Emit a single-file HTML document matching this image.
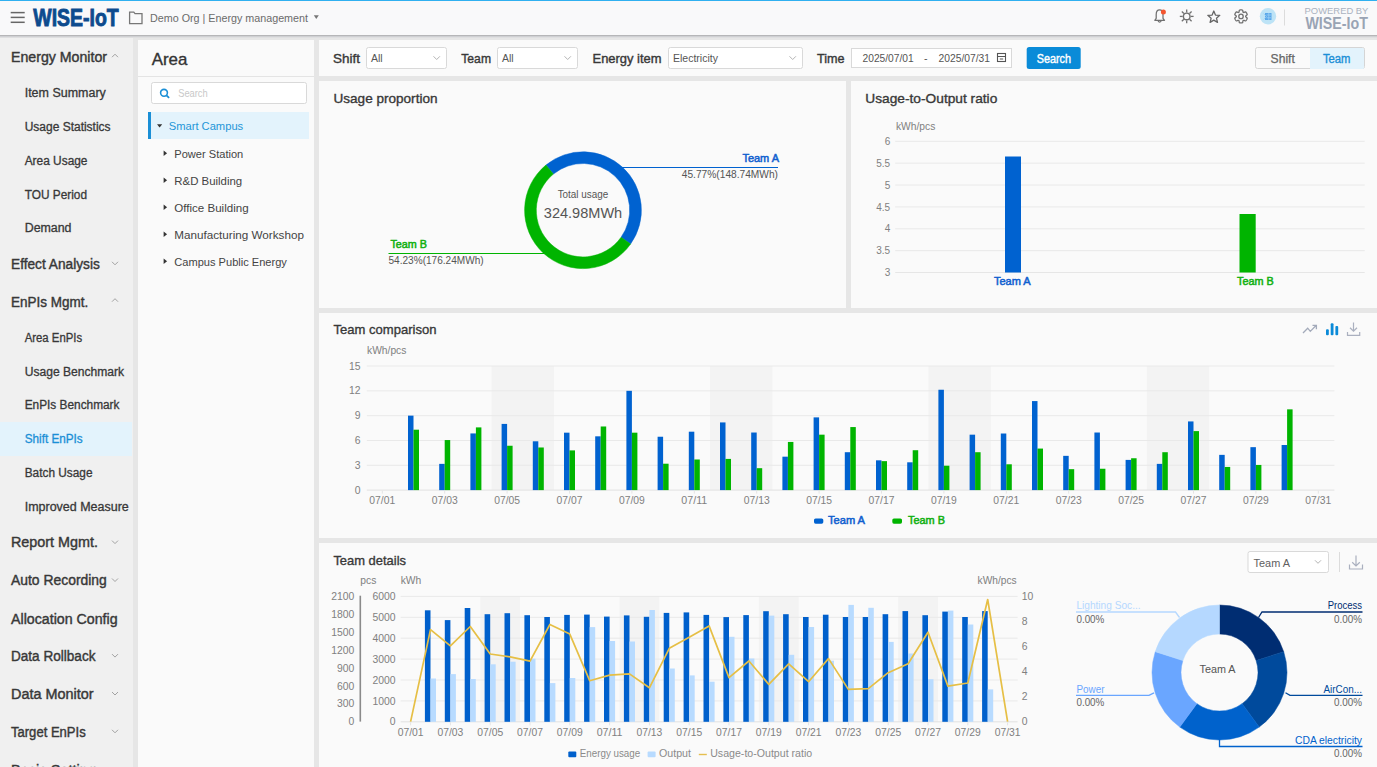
<!DOCTYPE html><html><head><meta charset="utf-8"><style>html,body{margin:0;padding:0;width:1377px;height:767px;overflow:hidden;background:#e6e6e6}svg{display:block}</style></head><body><svg width="1377" height="767" viewBox="0 0 1377 767" font-family='"Liberation Sans", sans-serif'>
<rect x="0" y="0" width="1377" height="767" fill="#e6e6e6"/>
<rect x="0" y="0" width="1377" height="35" fill="#f9f9fa"/>
<rect x="0" y="0" width="1377" height="1" fill="#30b0f0"/>
<rect x="0" y="35" width="1377" height="1" fill="#b6b6b8"/>
<rect x="0" y="36" width="1377" height="1" fill="#cfd0d3"/>
<rect x="0" y="37" width="1377" height="1" fill="#dfdfe0"/>
<rect x="10.7" y="11.85" width="14" height="1.5" fill="#666"/>
<rect x="10.7" y="16.65" width="14" height="1.5" fill="#666"/>
<rect x="10.7" y="21.55" width="14" height="1.5" fill="#666"/>
<text x="33.3" y="26.1" font-size="23.5" fill="#0d4b8e" font-weight="700" text-anchor="start" textLength="85.4" lengthAdjust="spacingAndGlyphs" stroke="#0d4b8e" stroke-width="0.9">WISE-IoT</text>
<path d="M129.6 12.2 h4.2 l1.2 1.4 h7 v10 h-12.4 z" fill="none" stroke="#777" stroke-width="1.3"/>
<text x="150" y="22.1" font-size="11" fill="#6b6b6b" text-anchor="start" textLength="158" lengthAdjust="spacingAndGlyphs">Demo Org | Energy management</text>
<path d="M313.8 15.3 h5 l-2.5 3.6 z" fill="#777"/>
<path d="M1154.8 20.3 L1156.2 18.3 V14.6 C1156.2 11.8 1157.7 9.9 1159.6 9.9 C1161.5 9.9 1163 11.8 1163 14.6 V18.3 L1164.5 20.3 Z M1158.1 20.6 a1.5 1.5 0 0 0 3 0" fill="none" stroke="#707070" stroke-width="1.25" stroke-linejoin="round"/>
<circle cx="1163.4" cy="12.1" r="2.5" fill="#f4552f"/>
<circle cx="1186.7" cy="16.4" r="3.3" fill="none" stroke="#707070" stroke-width="1.4"/>
<line x1="1190.70" y1="16.40" x2="1193.60" y2="16.40" stroke="#707070" stroke-width="1.3"/>
<line x1="1189.53" y1="19.23" x2="1191.58" y2="21.28" stroke="#707070" stroke-width="1.3"/>
<line x1="1186.70" y1="20.40" x2="1186.70" y2="23.30" stroke="#707070" stroke-width="1.3"/>
<line x1="1183.87" y1="19.23" x2="1181.82" y2="21.28" stroke="#707070" stroke-width="1.3"/>
<line x1="1182.70" y1="16.40" x2="1179.80" y2="16.40" stroke="#707070" stroke-width="1.3"/>
<line x1="1183.87" y1="13.57" x2="1181.82" y2="11.52" stroke="#707070" stroke-width="1.3"/>
<line x1="1186.70" y1="12.40" x2="1186.70" y2="9.50" stroke="#707070" stroke-width="1.3"/>
<line x1="1189.53" y1="13.57" x2="1191.58" y2="11.52" stroke="#707070" stroke-width="1.3"/>
<polygon points="1213.80,11.00 1215.45,15.03 1219.79,15.35 1216.46,18.17 1217.50,22.40 1213.80,20.10 1210.10,22.40 1211.14,18.17 1207.81,15.35 1212.15,15.03" fill="none" stroke="#666" stroke-width="1.3" stroke-linejoin="round"/>
<polygon points="1241.00,9.90 1241.43,9.91 1241.85,9.96 1242.27,10.02 1242.66,10.21 1242.82,11.05 1242.92,11.77 1243.08,12.18 1243.35,12.33 1243.61,12.49 1244.05,12.43 1244.73,12.15 1245.53,11.87 1245.89,12.11 1246.16,12.44 1246.40,12.79 1246.63,13.15 1246.83,13.53 1247.01,13.91 1247.16,14.31 1247.19,14.74 1246.54,15.30 1245.97,15.75 1245.69,16.09 1245.70,16.40 1245.69,16.71 1245.97,17.05 1246.54,17.50 1247.19,18.06 1247.16,18.49 1247.01,18.89 1246.83,19.27 1246.63,19.65 1246.40,20.01 1246.16,20.36 1245.89,20.69 1245.53,20.93 1244.73,20.65 1244.05,20.37 1243.61,20.31 1243.35,20.47 1243.08,20.62 1242.92,21.03 1242.82,21.75 1242.66,22.59 1242.27,22.78 1241.85,22.84 1241.43,22.89 1241.00,22.90 1240.57,22.89 1240.15,22.84 1239.73,22.78 1239.34,22.59 1239.18,21.75 1239.08,21.03 1238.92,20.62 1238.65,20.47 1238.39,20.31 1237.95,20.37 1237.27,20.65 1236.47,20.93 1236.11,20.69 1235.84,20.36 1235.60,20.01 1235.37,19.65 1235.17,19.27 1234.99,18.89 1234.84,18.49 1234.81,18.06 1235.46,17.50 1236.03,17.05 1236.31,16.71 1236.30,16.40 1236.31,16.09 1236.03,15.75 1235.46,15.30 1234.81,14.74 1234.84,14.31 1234.99,13.91 1235.17,13.53 1235.37,13.15 1235.60,12.79 1235.84,12.44 1236.11,12.11 1236.47,11.87 1237.27,12.15 1237.95,12.43 1238.39,12.49 1238.65,12.33 1238.92,12.18 1239.08,11.77 1239.18,11.05 1239.34,10.21 1239.73,10.02 1240.15,9.96 1240.57,9.91" fill="none" stroke="#707070" stroke-width="1.3" stroke-linejoin="round"/>
<circle cx="1241" cy="16.4" r="2.2" fill="none" stroke="#707070" stroke-width="1.3"/>
<circle cx="1268" cy="16.3" r="8.2" fill="#bde3f6"/>
<rect x="1265" y="13" width="6.5" height="7" fill="#5aa8ea"/><path d="M1263.5 13.5 l3 3 l-3 3 M1266.5 15 h4.5 M1266.5 17.8 h4.5 M1268.8 13 v7" stroke="#9ccff5" stroke-width="0.8" fill="none"/>
<rect x="1284" y="9.5" width="1" height="16" fill="#dcdcdc"/>
<text x="1304.6" y="13.8" font-size="9.2" fill="#aab2c0" text-anchor="start" textLength="63.8" lengthAdjust="spacingAndGlyphs">POWERED BY</text>
<text x="1305.4" y="28.9" font-size="16.6" fill="#9aa4b4" font-weight="700" text-anchor="start" textLength="62.6" lengthAdjust="spacingAndGlyphs">WISE-IoT</text>
<rect x="0" y="38" width="133" height="729" fill="#f0f0f0"/>
<rect x="0" y="422" width="132" height="34" fill="#e3f3fc"/>
<text x="11" y="62" font-size="13.8" fill="#383838" stroke="#383838" stroke-width="0.4" text-anchor="start" textLength="96" lengthAdjust="spacingAndGlyphs">Energy Monitor</text>
<path d="M112 57.2 l3 -3 l3 3" fill="none" stroke="#999" stroke-width="0.9"/>
<text x="11" y="268.5" font-size="13.8" fill="#383838" stroke="#383838" stroke-width="0.4" text-anchor="start" textLength="88.8" lengthAdjust="spacingAndGlyphs">Effect Analysis</text>
<path d="M112 261.8 l3 3 l3 -3" fill="none" stroke="#999" stroke-width="0.9"/>
<text x="11" y="306.5" font-size="13.8" fill="#383838" stroke="#383838" stroke-width="0.4" text-anchor="start" textLength="77.2" lengthAdjust="spacingAndGlyphs">EnPIs Mgmt.</text>
<path d="M112 301.7 l3 -3 l3 3" fill="none" stroke="#999" stroke-width="0.9"/>
<text x="11" y="547.3" font-size="13.8" fill="#383838" stroke="#383838" stroke-width="0.4" text-anchor="start" textLength="87" lengthAdjust="spacingAndGlyphs">Report Mgmt.</text>
<path d="M112 540.5999999999999 l3 3 l3 -3" fill="none" stroke="#999" stroke-width="0.9"/>
<text x="11" y="585.2" font-size="13.8" fill="#383838" stroke="#383838" stroke-width="0.4" text-anchor="start" textLength="95.8" lengthAdjust="spacingAndGlyphs">Auto Recording</text>
<path d="M112 578.5 l3 3 l3 -3" fill="none" stroke="#999" stroke-width="0.9"/>
<text x="11" y="623.5" font-size="13.8" fill="#383838" stroke="#383838" stroke-width="0.4" text-anchor="start" textLength="106.6" lengthAdjust="spacingAndGlyphs">Allocation Config</text>
<text x="11" y="660.8" font-size="13.8" fill="#383838" stroke="#383838" stroke-width="0.4" text-anchor="start" textLength="84.5" lengthAdjust="spacingAndGlyphs">Data Rollback</text>
<path d="M112 654.0999999999999 l3 3 l3 -3" fill="none" stroke="#999" stroke-width="0.9"/>
<text x="11" y="698.7" font-size="13.8" fill="#383838" stroke="#383838" stroke-width="0.4" text-anchor="start" textLength="82.6" lengthAdjust="spacingAndGlyphs">Data Monitor</text>
<path d="M112 692.0 l3 3 l3 -3" fill="none" stroke="#999" stroke-width="0.9"/>
<text x="11" y="736.5" font-size="13.8" fill="#383838" stroke="#383838" stroke-width="0.4" text-anchor="start" textLength="74.7" lengthAdjust="spacingAndGlyphs">Target EnPIs</text>
<path d="M112 729.8 l3 3 l3 -3" fill="none" stroke="#999" stroke-width="0.9"/>
<text x="11" y="774.5" font-size="13.8" fill="#383838" stroke="#383838" stroke-width="0.4" text-anchor="start" textLength="85" lengthAdjust="spacingAndGlyphs">Basic Setting</text>
<text x="24.7" y="97.1" font-size="12" fill="#383838" stroke="#383838" stroke-width="0.3" text-anchor="start" textLength="81.1" lengthAdjust="spacingAndGlyphs">Item Summary</text>
<text x="24.7" y="130.9" font-size="12" fill="#383838" stroke="#383838" stroke-width="0.3" text-anchor="start" textLength="85.9" lengthAdjust="spacingAndGlyphs">Usage Statistics</text>
<text x="24.7" y="164.70000000000002" font-size="12" fill="#383838" stroke="#383838" stroke-width="0.3" text-anchor="start" textLength="62.8" lengthAdjust="spacingAndGlyphs">Area Usage</text>
<text x="24.7" y="198.5" font-size="12" fill="#383838" stroke="#383838" stroke-width="0.3" text-anchor="start" textLength="62.3" lengthAdjust="spacingAndGlyphs">TOU Period</text>
<text x="24.7" y="232.3" font-size="12" fill="#383838" stroke="#383838" stroke-width="0.3" text-anchor="start" textLength="46.8" lengthAdjust="spacingAndGlyphs">Demand</text>
<text x="24.7" y="342.0" font-size="12" fill="#383838" stroke="#383838" stroke-width="0.3" text-anchor="start" textLength="57.4" lengthAdjust="spacingAndGlyphs">Area EnPIs</text>
<text x="24.7" y="375.8" font-size="12" fill="#383838" stroke="#383838" stroke-width="0.3" text-anchor="start" textLength="99.4" lengthAdjust="spacingAndGlyphs">Usage Benchmark</text>
<text x="24.7" y="409.2" font-size="12" fill="#383838" stroke="#383838" stroke-width="0.3" text-anchor="start" textLength="94.8" lengthAdjust="spacingAndGlyphs">EnPIs Benchmark</text>
<text x="24.7" y="443.40000000000003" font-size="12" fill="#1b8fd6" stroke="#1b8fd6" stroke-width="0.3" text-anchor="start" textLength="58" lengthAdjust="spacingAndGlyphs">Shift EnPIs</text>
<text x="24.7" y="477.1" font-size="12" fill="#383838" stroke="#383838" stroke-width="0.3" text-anchor="start" textLength="67.8" lengthAdjust="spacingAndGlyphs">Batch Usage</text>
<text x="24.7" y="511.3" font-size="12" fill="#383838" stroke="#383838" stroke-width="0.3" text-anchor="start" textLength="104.1" lengthAdjust="spacingAndGlyphs">Improved Measure</text>
<rect x="138" y="40" width="176" height="727" fill="#fafafa"/>
<rect x="138" y="76" width="176" height="1" fill="#e4e4e4"/>
<text x="151.7" y="64.6" font-size="17" fill="#333" stroke="#333" stroke-width="0.35" text-anchor="start" textLength="35.7" lengthAdjust="spacingAndGlyphs">Area</text>
<rect x="151.5" y="82.5" width="155" height="21" rx="2" fill="#fff" stroke="#d9d9d9" stroke-width="1"/>
<circle cx="164" cy="92.8" r="3.4" fill="none" stroke="#1b8fd6" stroke-width="1.6"/><path d="M166.5 95.3 l2.6 2.6" stroke="#1b8fd6" stroke-width="1.8"/>
<text x="178.2" y="97.3" font-size="10.5" fill="#c8c8c8" text-anchor="start" textLength="29.5" lengthAdjust="spacingAndGlyphs">Search</text>
<rect x="148" y="112" width="161" height="27" fill="#e3f3fc"/>
<rect x="148" y="112" width="3" height="27" fill="#1b8fd6"/>
<path d="M157 124.2 h5.2 l-2.6 3.2 z" fill="#333"/>
<text x="168.7" y="130.3" font-size="11.3" fill="#1f96d8" text-anchor="start" textLength="74.5" lengthAdjust="spacingAndGlyphs">Smart Campus</text>
<path d="M163.6 150.5 v5.6 l3.5 -2.8 z" fill="#333"/>
<text x="174.3" y="157.5" font-size="11.5" fill="#444" text-anchor="start" textLength="69" lengthAdjust="spacingAndGlyphs">Power Station</text>
<path d="M163.6 177.5 v5.6 l3.5 -2.8 z" fill="#333"/>
<text x="174.3" y="184.5" font-size="11.5" fill="#444" text-anchor="start" textLength="67.9" lengthAdjust="spacingAndGlyphs">R&amp;D Building</text>
<path d="M163.6 204.5 v5.6 l3.5 -2.8 z" fill="#333"/>
<text x="174.3" y="211.5" font-size="11.5" fill="#444" text-anchor="start" textLength="74.3" lengthAdjust="spacingAndGlyphs">Office Building</text>
<path d="M163.6 231.5 v5.6 l3.5 -2.8 z" fill="#333"/>
<text x="174.3" y="238.5" font-size="11.5" fill="#444" text-anchor="start" textLength="129.6" lengthAdjust="spacingAndGlyphs">Manufacturing Workshop</text>
<path d="M163.6 258.5 v5.6 l3.5 -2.8 z" fill="#333"/>
<text x="174.3" y="265.5" font-size="11.5" fill="#444" text-anchor="start" textLength="112.6" lengthAdjust="spacingAndGlyphs">Campus Public Energy</text>
<rect x="319" y="40" width="1058" height="36" fill="#fafafa"/>
<rect x="319" y="81" width="527" height="227" fill="#fafafa"/>
<rect x="851" y="81" width="526" height="227" fill="#fafafa"/>
<rect x="319" y="313" width="1058" height="225" fill="#fafafa"/>
<rect x="319" y="543" width="1058" height="224" fill="#fafafa"/>
<text x="332.9" y="62.8" font-size="13.5" fill="#383838" stroke="#383838" stroke-width="0.4" text-anchor="start" textLength="27" lengthAdjust="spacingAndGlyphs">Shift</text>
<rect x="366.5" y="47.5" width="80" height="21" rx="2" fill="#fff" stroke="#d9d9d9"/>
<text x="371" y="61.6" font-size="10.5" fill="#555" text-anchor="start">All</text>
<path d="M433.5 56.3 l3.2 3.2 l3.2 -3.2" fill="none" stroke="#aaa" stroke-width="0.9"/>
<text x="461.3" y="62.8" font-size="13.5" fill="#383838" stroke="#383838" stroke-width="0.4" text-anchor="start" textLength="29.7" lengthAdjust="spacingAndGlyphs">Team</text>
<rect x="497.5" y="47.5" width="80" height="21" rx="2" fill="#fff" stroke="#d9d9d9"/>
<text x="502" y="61.6" font-size="10.5" fill="#555" text-anchor="start">All</text>
<path d="M564.5 56.3 l3.2 3.2 l3.2 -3.2" fill="none" stroke="#aaa" stroke-width="0.9"/>
<text x="592.5" y="62.8" font-size="13.5" fill="#383838" stroke="#383838" stroke-width="0.4" text-anchor="start" textLength="69" lengthAdjust="spacingAndGlyphs">Energy item</text>
<rect x="668.5" y="47.5" width="134" height="21" rx="2" fill="#fff" stroke="#d9d9d9"/>
<text x="673" y="61.6" font-size="10.5" fill="#555" text-anchor="start">Electricity</text>
<path d="M789.5 56.3 l3.2 3.2 l3.2 -3.2" fill="none" stroke="#aaa" stroke-width="0.9"/>
<text x="817" y="62.8" font-size="13.5" fill="#383838" stroke="#383838" stroke-width="0.4" text-anchor="start" textLength="27.5" lengthAdjust="spacingAndGlyphs">Time</text>
<rect x="851.5" y="48.5" width="160" height="19" fill="#fff" stroke="#d9d9d9"/>
<text x="862.5" y="62" font-size="10.6" fill="#555" text-anchor="start" textLength="51.2" lengthAdjust="spacingAndGlyphs">2025/07/01</text>
<text x="924" y="61.5" font-size="10.6" fill="#555" text-anchor="start">-</text>
<text x="938.5" y="62" font-size="10.6" fill="#555" text-anchor="start" textLength="51.5" lengthAdjust="spacingAndGlyphs">2025/07/31</text>
<rect x="997.5" y="53.5" width="8" height="8" fill="none" stroke="#555" stroke-width="1.1"/><path d="M997.5 56.5 h8 M999.8 59 h3.4" stroke="#555" stroke-width="1"/>
<rect x="1026.7" y="46.9" width="54" height="22.1" rx="2.5" fill="#0a8bd8"/>
<text x="1053.9" y="62.6" font-size="12" fill="#fff" stroke="#fff" stroke-width="0.4" text-anchor="middle" textLength="34.3" lengthAdjust="spacingAndGlyphs">Search</text>
<rect x="1255.5" y="47.5" width="109" height="21" rx="2" fill="#fafafa" stroke="#d5d5d5"/>
<path d="M1310 48 h52.5 a1.5 1.5 0 0 1 1.5 1.5 v18 a1.5 1.5 0 0 1 -1.5 1.5 h-52.5 z" fill="#e3f3fc"/>
<text x="1282.7" y="62.8" font-size="12" fill="#666" stroke="#666" stroke-width="0.25" text-anchor="middle" textLength="24.2" lengthAdjust="spacingAndGlyphs">Shift</text>
<text x="1336.7" y="62.8" font-size="12" fill="#1b8fd6" stroke="#1b8fd6" stroke-width="0.35" text-anchor="middle" textLength="27.6" lengthAdjust="spacingAndGlyphs">Team</text>
<text x="333.5" y="103.2" font-size="13.3" fill="#383838" stroke="#383838" stroke-width="0.35" text-anchor="start" textLength="104" lengthAdjust="spacingAndGlyphs">Usage proportion</text>
<path d="M545.93 165.07 A58.4 58.4 0 0 1 630.60 244.03 L621.07 237.25 A46.7 46.7 0 0 0 553.36 174.11 Z" fill="#0062d0" stroke="#0062d0" stroke-width="0.5" stroke-linejoin="bevel"/>
<path d="M630.60 244.03 A58.4 58.4 0 1 1 545.93 165.07 L553.36 174.11 A46.7 46.7 0 1 0 621.07 237.25 Z" fill="#00b400" stroke="#00b400" stroke-width="0.5" stroke-linejoin="bevel"/>
<text x="583" y="197.6" font-size="10" fill="#555" text-anchor="middle" textLength="50.7" lengthAdjust="spacingAndGlyphs">Total usage</text>
<text x="583" y="217.6" font-size="14.5" fill="#555" text-anchor="middle" textLength="78.4" lengthAdjust="spacingAndGlyphs">324.98MWh</text>
<path d="M620 167.5 H778" stroke="#0062d0" stroke-width="1"/>
<text x="779" y="161.9" font-size="10.5" fill="#1060cf" stroke="#1060cf" stroke-width="0.5" text-anchor="end" textLength="36.6" lengthAdjust="spacingAndGlyphs">Team A</text>
<text x="778" y="178" font-size="10.2" fill="#555" text-anchor="end" textLength="96.2" lengthAdjust="spacingAndGlyphs">45.77%(148.74MWh)</text>
<path d="M388.5 253.5 H545" stroke="#00b400" stroke-width="1"/>
<text x="390.4" y="248.1" font-size="10.5" fill="#10b010" stroke="#10b010" stroke-width="0.5" text-anchor="start" textLength="36.6" lengthAdjust="spacingAndGlyphs">Team B</text>
<text x="388.5" y="263.8" font-size="10.2" fill="#555" text-anchor="start" textLength="95.1" lengthAdjust="spacingAndGlyphs">54.23%(176.24MWh)</text>
<text x="865.3" y="103.2" font-size="13.3" fill="#383838" stroke="#383838" stroke-width="0.35" text-anchor="start" textLength="132" lengthAdjust="spacingAndGlyphs">Usage-to-Output ratio</text>
<text x="895.9" y="129.6" font-size="10.3" fill="#808080" text-anchor="start" textLength="39.4" lengthAdjust="spacingAndGlyphs">kWh/pcs</text>
<rect x="895.2" y="140.80" width="469.5" height="1" fill="#e9e9e9"/>
<text x="890.2" y="144.9" font-size="10" fill="#808080" text-anchor="end">6</text>
<rect x="895.2" y="162.67" width="469.5" height="1" fill="#e9e9e9"/>
<text x="890.2" y="166.76666666666668" font-size="10" fill="#808080" text-anchor="end">5.5</text>
<rect x="895.2" y="184.53" width="469.5" height="1" fill="#e9e9e9"/>
<text x="890.2" y="188.63333333333333" font-size="10" fill="#808080" text-anchor="end">5</text>
<rect x="895.2" y="206.40" width="469.5" height="1" fill="#e9e9e9"/>
<text x="890.2" y="210.5" font-size="10" fill="#808080" text-anchor="end">4.5</text>
<rect x="895.2" y="228.27" width="469.5" height="1" fill="#e9e9e9"/>
<text x="890.2" y="232.36666666666665" font-size="10" fill="#808080" text-anchor="end">4</text>
<rect x="895.2" y="250.13" width="469.5" height="1" fill="#e9e9e9"/>
<text x="890.2" y="254.23333333333332" font-size="10" fill="#808080" text-anchor="end">3.5</text>
<rect x="895.2" y="272.00" width="469.5" height="1" fill="#e6e6e6"/>
<text x="890.2" y="276.1" font-size="10" fill="#808080" text-anchor="end">3</text>
<rect x="1005" y="156.5" width="16" height="116.0" fill="#0062d0"/>
<rect x="1239.5" y="214" width="16.2" height="58.5" fill="#00b400"/>
<text x="994" y="285.2" font-size="10.5" fill="#1060cf" stroke="#1060cf" stroke-width="0.5" text-anchor="start" textLength="36.7" lengthAdjust="spacingAndGlyphs">Team A</text>
<text x="1237.1" y="285.2" font-size="10.5" fill="#10b010" stroke="#10b010" stroke-width="0.5" text-anchor="start" textLength="36.7" lengthAdjust="spacingAndGlyphs">Team B</text>
<text x="333.5" y="334" font-size="13.3" fill="#383838" stroke="#383838" stroke-width="0.35" text-anchor="start" textLength="103" lengthAdjust="spacingAndGlyphs">Team comparison</text>
<text x="367" y="353.5" font-size="10.3" fill="#808080" text-anchor="start" textLength="39.4" lengthAdjust="spacingAndGlyphs">kWh/pcs</text>
<rect x="491.6" y="366.0" width="62.4" height="124.10000000000002" fill="#f3f3f3"/>
<rect x="710.0" y="366.0" width="62.4" height="124.10000000000002" fill="#f3f3f3"/>
<rect x="928.4000000000001" y="366.0" width="62.4" height="124.10000000000002" fill="#f3f3f3"/>
<rect x="1146.8" y="366.0" width="62.4" height="124.10000000000002" fill="#f3f3f3"/>
<rect x="366.8" y="365.50" width="967.6000000000001" height="1" fill="#e9e9e9"/>
<text x="360.5" y="369.6" font-size="10.4" fill="#808080" text-anchor="end">15</text>
<rect x="366.8" y="390.32" width="967.6000000000001" height="1" fill="#e9e9e9"/>
<text x="360.5" y="394.42" font-size="10.4" fill="#808080" text-anchor="end">12</text>
<rect x="366.8" y="415.14" width="967.6000000000001" height="1" fill="#e9e9e9"/>
<text x="360.5" y="419.24" font-size="10.4" fill="#808080" text-anchor="end">9</text>
<rect x="366.8" y="439.96" width="967.6000000000001" height="1" fill="#e9e9e9"/>
<text x="360.5" y="444.06000000000006" font-size="10.4" fill="#808080" text-anchor="end">6</text>
<rect x="366.8" y="464.78" width="967.6000000000001" height="1" fill="#e9e9e9"/>
<text x="360.5" y="468.88000000000005" font-size="10.4" fill="#808080" text-anchor="end">3</text>
<rect x="366.8" y="489.60" width="967.6000000000001" height="1" fill="#e2e2e2"/>
<text x="360.5" y="493.70000000000005" font-size="10.4" fill="#808080" text-anchor="end">0</text>
<text x="382.30" y="504.2" font-size="10.4" fill="#808080" text-anchor="middle" textLength="25.9" lengthAdjust="spacingAndGlyphs">07/01</text>
<rect x="381.80" y="490.6" width="1" height="3" fill="#e4e4e4"/>
<rect x="408.00" y="415.64" width="5.5" height="74.46" fill="#0062d0"/>
<rect x="413.50" y="429.70" width="5.5" height="60.40" fill="#00b400"/>
<rect x="439.20" y="463.87" width="5.5" height="26.23" fill="#0062d0"/>
<rect x="444.70" y="440.05" width="5.5" height="50.05" fill="#00b400"/>
<text x="444.70" y="504.2" font-size="10.4" fill="#808080" text-anchor="middle" textLength="25.9" lengthAdjust="spacingAndGlyphs">07/03</text>
<rect x="444.20" y="490.6" width="1" height="3" fill="#e4e4e4"/>
<rect x="470.40" y="433.43" width="5.5" height="56.67" fill="#0062d0"/>
<rect x="475.90" y="427.39" width="5.5" height="62.71" fill="#00b400"/>
<rect x="501.60" y="423.91" width="5.5" height="66.19" fill="#0062d0"/>
<rect x="507.10" y="445.75" width="5.5" height="44.35" fill="#00b400"/>
<text x="507.10" y="504.2" font-size="10.4" fill="#808080" text-anchor="middle" textLength="25.9" lengthAdjust="spacingAndGlyphs">07/05</text>
<rect x="506.60" y="490.6" width="1" height="3" fill="#e4e4e4"/>
<rect x="532.80" y="441.29" width="5.5" height="48.81" fill="#0062d0"/>
<rect x="538.30" y="447.49" width="5.5" height="42.61" fill="#00b400"/>
<rect x="564.00" y="432.68" width="5.5" height="57.42" fill="#0062d0"/>
<rect x="569.50" y="450.39" width="5.5" height="39.71" fill="#00b400"/>
<text x="569.50" y="504.2" font-size="10.4" fill="#808080" text-anchor="middle" textLength="25.9" lengthAdjust="spacingAndGlyphs">07/07</text>
<rect x="569.00" y="490.6" width="1" height="3" fill="#e4e4e4"/>
<rect x="595.20" y="436.32" width="5.5" height="53.78" fill="#0062d0"/>
<rect x="600.70" y="426.48" width="5.5" height="63.62" fill="#00b400"/>
<rect x="626.40" y="390.82" width="5.5" height="99.28" fill="#0062d0"/>
<rect x="631.90" y="432.68" width="5.5" height="57.42" fill="#00b400"/>
<text x="631.90" y="504.2" font-size="10.4" fill="#808080" text-anchor="middle" textLength="25.9" lengthAdjust="spacingAndGlyphs">07/09</text>
<rect x="631.40" y="490.6" width="1" height="3" fill="#e4e4e4"/>
<rect x="657.60" y="436.74" width="5.5" height="53.36" fill="#0062d0"/>
<rect x="663.10" y="463.71" width="5.5" height="26.39" fill="#00b400"/>
<rect x="688.80" y="431.69" width="5.5" height="58.41" fill="#0062d0"/>
<rect x="694.30" y="459.49" width="5.5" height="30.61" fill="#00b400"/>
<text x="694.30" y="504.2" font-size="10.4" fill="#808080" text-anchor="middle" textLength="25.9" lengthAdjust="spacingAndGlyphs">07/11</text>
<rect x="693.80" y="490.6" width="1" height="3" fill="#e4e4e4"/>
<rect x="720.00" y="422.42" width="5.5" height="67.68" fill="#0062d0"/>
<rect x="725.50" y="458.91" width="5.5" height="31.19" fill="#00b400"/>
<rect x="751.20" y="432.52" width="5.5" height="57.58" fill="#0062d0"/>
<rect x="756.70" y="468.18" width="5.5" height="21.92" fill="#00b400"/>
<text x="756.70" y="504.2" font-size="10.4" fill="#808080" text-anchor="middle" textLength="25.9" lengthAdjust="spacingAndGlyphs">07/13</text>
<rect x="756.20" y="490.6" width="1" height="3" fill="#e4e4e4"/>
<rect x="782.40" y="456.68" width="5.5" height="33.42" fill="#0062d0"/>
<rect x="787.90" y="441.95" width="5.5" height="48.15" fill="#00b400"/>
<rect x="813.60" y="417.38" width="5.5" height="72.72" fill="#0062d0"/>
<rect x="819.10" y="434.67" width="5.5" height="55.43" fill="#00b400"/>
<text x="819.10" y="504.2" font-size="10.4" fill="#808080" text-anchor="middle" textLength="25.9" lengthAdjust="spacingAndGlyphs">07/15</text>
<rect x="818.60" y="490.6" width="1" height="3" fill="#e4e4e4"/>
<rect x="844.80" y="452.21" width="5.5" height="37.89" fill="#0062d0"/>
<rect x="850.30" y="427.06" width="5.5" height="63.04" fill="#00b400"/>
<rect x="876.00" y="460.32" width="5.5" height="29.78" fill="#0062d0"/>
<rect x="881.50" y="461.14" width="5.5" height="28.96" fill="#00b400"/>
<text x="881.50" y="504.2" font-size="10.4" fill="#808080" text-anchor="middle" textLength="25.9" lengthAdjust="spacingAndGlyphs">07/17</text>
<rect x="881.00" y="490.6" width="1" height="3" fill="#e4e4e4"/>
<rect x="907.20" y="462.30" width="5.5" height="27.80" fill="#0062d0"/>
<rect x="912.70" y="450.22" width="5.5" height="39.88" fill="#00b400"/>
<rect x="938.40" y="389.74" width="5.5" height="100.36" fill="#0062d0"/>
<rect x="943.90" y="465.69" width="5.5" height="24.41" fill="#00b400"/>
<text x="943.90" y="504.2" font-size="10.4" fill="#808080" text-anchor="middle" textLength="25.9" lengthAdjust="spacingAndGlyphs">07/19</text>
<rect x="943.40" y="490.6" width="1" height="3" fill="#e4e4e4"/>
<rect x="969.60" y="434.67" width="5.5" height="55.43" fill="#0062d0"/>
<rect x="975.10" y="452.21" width="5.5" height="37.89" fill="#00b400"/>
<rect x="1000.80" y="433.51" width="5.5" height="56.59" fill="#0062d0"/>
<rect x="1006.30" y="464.29" width="5.5" height="25.81" fill="#00b400"/>
<text x="1006.30" y="504.2" font-size="10.4" fill="#808080" text-anchor="middle" textLength="25.9" lengthAdjust="spacingAndGlyphs">07/21</text>
<rect x="1005.80" y="490.6" width="1" height="3" fill="#e4e4e4"/>
<rect x="1032.00" y="401.08" width="5.5" height="89.02" fill="#0062d0"/>
<rect x="1037.50" y="448.57" width="5.5" height="41.53" fill="#00b400"/>
<rect x="1063.20" y="455.85" width="5.5" height="34.25" fill="#0062d0"/>
<rect x="1068.70" y="469.17" width="5.5" height="20.93" fill="#00b400"/>
<text x="1068.70" y="504.2" font-size="10.4" fill="#808080" text-anchor="middle" textLength="25.9" lengthAdjust="spacingAndGlyphs">07/23</text>
<rect x="1068.20" y="490.6" width="1" height="3" fill="#e4e4e4"/>
<rect x="1094.40" y="432.52" width="5.5" height="57.58" fill="#0062d0"/>
<rect x="1099.90" y="468.75" width="5.5" height="21.35" fill="#00b400"/>
<rect x="1125.60" y="459.90" width="5.5" height="30.20" fill="#0062d0"/>
<rect x="1131.10" y="458.25" width="5.5" height="31.85" fill="#00b400"/>
<text x="1131.10" y="504.2" font-size="10.4" fill="#808080" text-anchor="middle" textLength="25.9" lengthAdjust="spacingAndGlyphs">07/25</text>
<rect x="1130.60" y="490.6" width="1" height="3" fill="#e4e4e4"/>
<rect x="1156.80" y="463.87" width="5.5" height="26.23" fill="#0062d0"/>
<rect x="1162.30" y="452.21" width="5.5" height="37.89" fill="#00b400"/>
<rect x="1188.00" y="421.43" width="5.5" height="68.67" fill="#0062d0"/>
<rect x="1193.50" y="431.11" width="5.5" height="58.99" fill="#00b400"/>
<text x="1193.50" y="504.2" font-size="10.4" fill="#808080" text-anchor="middle" textLength="25.9" lengthAdjust="spacingAndGlyphs">07/27</text>
<rect x="1193.00" y="490.6" width="1" height="3" fill="#e4e4e4"/>
<rect x="1219.20" y="454.86" width="5.5" height="35.24" fill="#0062d0"/>
<rect x="1224.70" y="466.93" width="5.5" height="23.17" fill="#00b400"/>
<rect x="1250.40" y="447.16" width="5.5" height="42.94" fill="#0062d0"/>
<rect x="1255.90" y="464.95" width="5.5" height="25.15" fill="#00b400"/>
<text x="1255.90" y="504.2" font-size="10.4" fill="#808080" text-anchor="middle" textLength="25.9" lengthAdjust="spacingAndGlyphs">07/29</text>
<rect x="1255.40" y="490.6" width="1" height="3" fill="#e4e4e4"/>
<rect x="1281.60" y="445.01" width="5.5" height="45.09" fill="#0062d0"/>
<rect x="1287.10" y="409.35" width="5.5" height="80.75" fill="#00b400"/>
<text x="1318.30" y="504.2" font-size="10.4" fill="#808080" text-anchor="middle" textLength="25.9" lengthAdjust="spacingAndGlyphs">07/31</text>
<rect x="1317.80" y="490.6" width="1" height="3" fill="#e4e4e4"/>
<rect x="814" y="518.5" width="9.3" height="5.2" rx="1.6" fill="#0062d0"/>
<text x="828" y="524" font-size="10.5" fill="#1060cf" stroke="#1060cf" stroke-width="0.5" text-anchor="start" textLength="37" lengthAdjust="spacingAndGlyphs">Team A</text>
<rect x="892.3" y="518.5" width="9.7" height="5.2" rx="1.6" fill="#00b400"/>
<text x="908" y="524" font-size="10.5" fill="#10b010" stroke="#10b010" stroke-width="0.5" text-anchor="start" textLength="37" lengthAdjust="spacingAndGlyphs">Team B</text>
<path d="M1303 333 L1307.7 328.2 L1310.3 331.4 L1315.8 325.8 M1312.5 325.3 H1316.4 V329.2" fill="none" stroke="#a3aaba" stroke-width="1.3"/>
<rect x="1326" y="329.2" width="2.8" height="6" rx="1" fill="#0a8ad8"/><rect x="1330.7" y="323.2" width="2.8" height="12" rx="1" fill="#0a8ad8"/><rect x="1335.4" y="326" width="2.8" height="9.2" rx="1" fill="#0a8ad8"/>
<path d="M1353.5 322.5 V331 M1350 327.8 L1353.5 331.2 L1357 327.8 M1347.5 332 V335.3 H1359.7 V332" fill="none" stroke="#aab0bf" stroke-width="1.2"/>
<text x="333.4" y="564.8" font-size="13.3" fill="#383838" stroke="#383838" stroke-width="0.35" text-anchor="start" textLength="72.6" lengthAdjust="spacingAndGlyphs">Team details</text>
<text x="360.3" y="584.4" font-size="10.3" fill="#808080" text-anchor="start">pcs</text>
<text x="400.7" y="584.4" font-size="10.3" fill="#808080" text-anchor="start">kWh</text>
<text x="1016.6" y="584.4" font-size="10.3" fill="#808080" text-anchor="end" textLength="39" lengthAdjust="spacingAndGlyphs">kWh/pcs</text>
<rect x="480.25" y="596.4" width="39.8" height="125.39999999999998" fill="#f3f3f3"/>
<rect x="619.55" y="596.4" width="39.8" height="125.39999999999998" fill="#f3f3f3"/>
<rect x="758.8499999999999" y="596.4" width="39.8" height="125.39999999999998" fill="#f3f3f3"/>
<rect x="898.1499999999999" y="596.4" width="39.8" height="125.39999999999998" fill="#f3f3f3"/>
<rect x="400.65" y="595.90" width="616.95" height="1" fill="#e9e9e9"/>
<text x="395.5" y="600.0" font-size="10.4" fill="#808080" text-anchor="end">6000</text>
<rect x="400.65" y="616.80" width="616.95" height="1" fill="#e9e9e9"/>
<text x="395.5" y="620.9" font-size="10.4" fill="#808080" text-anchor="end">5000</text>
<rect x="400.65" y="637.70" width="616.95" height="1" fill="#e9e9e9"/>
<text x="395.5" y="641.8" font-size="10.4" fill="#808080" text-anchor="end">4000</text>
<rect x="400.65" y="658.60" width="616.95" height="1" fill="#e9e9e9"/>
<text x="395.5" y="662.6999999999999" font-size="10.4" fill="#808080" text-anchor="end">3000</text>
<rect x="400.65" y="679.50" width="616.95" height="1" fill="#e9e9e9"/>
<text x="395.5" y="683.6" font-size="10.4" fill="#808080" text-anchor="end">2000</text>
<rect x="400.65" y="700.40" width="616.95" height="1" fill="#e9e9e9"/>
<text x="395.5" y="704.5" font-size="10.4" fill="#808080" text-anchor="end">1000</text>
<rect x="400.65" y="721.30" width="616.95" height="1" fill="#e2e2e2"/>
<text x="395.5" y="725.4" font-size="10.4" fill="#808080" text-anchor="end">0</text>
<text x="354.4" y="600.0" font-size="10.4" fill="#808080" text-anchor="end">2100</text>
<text x="354.4" y="617.9142857142857" font-size="10.4" fill="#808080" text-anchor="end">1800</text>
<text x="354.4" y="635.8285714285714" font-size="10.4" fill="#808080" text-anchor="end">1500</text>
<text x="354.4" y="653.7428571428571" font-size="10.4" fill="#808080" text-anchor="end">1200</text>
<text x="354.4" y="671.6571428571428" font-size="10.4" fill="#808080" text-anchor="end">900</text>
<text x="354.4" y="689.5714285714286" font-size="10.4" fill="#808080" text-anchor="end">600</text>
<text x="354.4" y="707.4857142857143" font-size="10.4" fill="#808080" text-anchor="end">300</text>
<text x="354.4" y="725.4" font-size="10.4" fill="#808080" text-anchor="end">0</text>
<text x="1021.7" y="600.0" font-size="10.4" fill="#808080" text-anchor="start">10</text>
<text x="1021.7" y="625.08" font-size="10.4" fill="#808080" text-anchor="start">8</text>
<text x="1021.7" y="650.16" font-size="10.4" fill="#808080" text-anchor="start">6</text>
<text x="1021.7" y="675.24" font-size="10.4" fill="#808080" text-anchor="start">4</text>
<text x="1021.7" y="700.3199999999999" font-size="10.4" fill="#808080" text-anchor="start">2</text>
<text x="1021.7" y="725.4" font-size="10.4" fill="#808080" text-anchor="start">0</text>
<rect x="359.5" y="595.7" width="1.6" height="125.89999999999998" fill="#8a8a8a"/>
<text x="410.60" y="736" font-size="10.4" fill="#808080" text-anchor="middle" textLength="25.9" lengthAdjust="spacingAndGlyphs">07/01</text>
<rect x="410.10" y="722.3" width="1" height="3" fill="#e4e4e4"/>
<rect x="424.90" y="610.3" width="5.6" height="111.50" fill="#0060cc"/>
<rect x="430.50" y="678.5" width="5.5" height="43.30" fill="#b8dbff"/>
<rect x="444.80" y="620.1" width="5.6" height="101.70" fill="#0060cc"/>
<rect x="450.40" y="674.1" width="5.5" height="47.70" fill="#b8dbff"/>
<text x="450.40" y="736" font-size="10.4" fill="#808080" text-anchor="middle" textLength="25.9" lengthAdjust="spacingAndGlyphs">07/03</text>
<rect x="449.90" y="722.3" width="1" height="3" fill="#e4e4e4"/>
<rect x="464.70" y="608.0" width="5.6" height="113.80" fill="#0060cc"/>
<rect x="470.30" y="679.0" width="5.5" height="42.80" fill="#b8dbff"/>
<rect x="484.60" y="614.2" width="5.6" height="107.60" fill="#0060cc"/>
<rect x="490.20" y="664.3" width="5.5" height="57.50" fill="#b8dbff"/>
<text x="490.20" y="736" font-size="10.4" fill="#808080" text-anchor="middle" textLength="25.9" lengthAdjust="spacingAndGlyphs">07/05</text>
<rect x="489.70" y="722.3" width="1" height="3" fill="#e4e4e4"/>
<rect x="504.50" y="613.2" width="5.6" height="108.60" fill="#0060cc"/>
<rect x="510.10" y="661.7" width="5.5" height="60.10" fill="#b8dbff"/>
<rect x="524.40" y="615.2" width="5.6" height="106.60" fill="#0060cc"/>
<rect x="530.00" y="658.7" width="5.5" height="63.10" fill="#b8dbff"/>
<text x="530.00" y="736" font-size="10.4" fill="#808080" text-anchor="middle" textLength="25.9" lengthAdjust="spacingAndGlyphs">07/07</text>
<rect x="529.50" y="722.3" width="1" height="3" fill="#e4e4e4"/>
<rect x="544.30" y="617.0" width="5.6" height="104.80" fill="#0060cc"/>
<rect x="549.90" y="683.1" width="5.5" height="38.70" fill="#b8dbff"/>
<rect x="564.20" y="614.9" width="5.6" height="106.90" fill="#0060cc"/>
<rect x="569.80" y="678.0" width="5.5" height="43.80" fill="#b8dbff"/>
<text x="569.80" y="736" font-size="10.4" fill="#808080" text-anchor="middle" textLength="25.9" lengthAdjust="spacingAndGlyphs">07/09</text>
<rect x="569.30" y="722.3" width="1" height="3" fill="#e4e4e4"/>
<rect x="584.10" y="614.6" width="5.6" height="107.20" fill="#0060cc"/>
<rect x="589.70" y="627.1" width="5.5" height="94.70" fill="#b8dbff"/>
<rect x="604.00" y="616.6" width="5.6" height="105.20" fill="#0060cc"/>
<rect x="609.60" y="641.0" width="5.5" height="80.80" fill="#b8dbff"/>
<text x="609.60" y="736" font-size="10.4" fill="#808080" text-anchor="middle" textLength="25.9" lengthAdjust="spacingAndGlyphs">07/11</text>
<rect x="609.10" y="722.3" width="1" height="3" fill="#e4e4e4"/>
<rect x="623.90" y="615.4" width="5.6" height="106.40" fill="#0060cc"/>
<rect x="629.50" y="641.5" width="5.5" height="80.30" fill="#b8dbff"/>
<rect x="643.80" y="616.8" width="5.6" height="105.00" fill="#0060cc"/>
<rect x="649.40" y="610.0" width="5.5" height="111.80" fill="#b8dbff"/>
<text x="649.40" y="736" font-size="10.4" fill="#808080" text-anchor="middle" textLength="25.9" lengthAdjust="spacingAndGlyphs">07/13</text>
<rect x="648.90" y="722.3" width="1" height="3" fill="#e4e4e4"/>
<rect x="663.70" y="612.9" width="5.6" height="108.90" fill="#0060cc"/>
<rect x="669.30" y="668.5" width="5.5" height="53.30" fill="#b8dbff"/>
<rect x="683.60" y="612.4" width="5.6" height="109.40" fill="#0060cc"/>
<rect x="689.20" y="675.4" width="5.5" height="46.40" fill="#b8dbff"/>
<text x="689.20" y="736" font-size="10.4" fill="#808080" text-anchor="middle" textLength="25.9" lengthAdjust="spacingAndGlyphs">07/15</text>
<rect x="688.70" y="722.3" width="1" height="3" fill="#e4e4e4"/>
<rect x="703.50" y="614.9" width="5.6" height="106.90" fill="#0060cc"/>
<rect x="709.10" y="681.7" width="5.5" height="40.10" fill="#b8dbff"/>
<rect x="723.40" y="617.1" width="5.6" height="104.70" fill="#0060cc"/>
<rect x="729.00" y="636.8" width="5.5" height="85.00" fill="#b8dbff"/>
<text x="729.00" y="736" font-size="10.4" fill="#808080" text-anchor="middle" textLength="25.9" lengthAdjust="spacingAndGlyphs">07/17</text>
<rect x="728.50" y="722.3" width="1" height="3" fill="#e4e4e4"/>
<rect x="743.30" y="615.1" width="5.6" height="106.70" fill="#0060cc"/>
<rect x="748.90" y="658.5" width="5.5" height="63.30" fill="#b8dbff"/>
<rect x="763.20" y="611.2" width="5.6" height="110.60" fill="#0060cc"/>
<rect x="768.80" y="615.6" width="5.5" height="106.20" fill="#b8dbff"/>
<text x="768.80" y="736" font-size="10.4" fill="#808080" text-anchor="middle" textLength="25.9" lengthAdjust="spacingAndGlyphs">07/19</text>
<rect x="768.30" y="722.3" width="1" height="3" fill="#e4e4e4"/>
<rect x="783.10" y="614.2" width="5.6" height="107.60" fill="#0060cc"/>
<rect x="788.70" y="654.8" width="5.5" height="67.00" fill="#b8dbff"/>
<rect x="803.00" y="617.0" width="5.6" height="104.80" fill="#0060cc"/>
<rect x="808.60" y="627.0" width="5.5" height="94.80" fill="#b8dbff"/>
<text x="808.60" y="736" font-size="10.4" fill="#808080" text-anchor="middle" textLength="25.9" lengthAdjust="spacingAndGlyphs">07/21</text>
<rect x="808.10" y="722.3" width="1" height="3" fill="#e4e4e4"/>
<rect x="822.90" y="614.7" width="5.6" height="107.10" fill="#0060cc"/>
<rect x="828.50" y="660.7" width="5.5" height="61.10" fill="#b8dbff"/>
<rect x="842.80" y="617.0" width="5.6" height="104.80" fill="#0060cc"/>
<rect x="848.40" y="604.9" width="5.5" height="116.90" fill="#b8dbff"/>
<text x="848.40" y="736" font-size="10.4" fill="#808080" text-anchor="middle" textLength="25.9" lengthAdjust="spacingAndGlyphs">07/23</text>
<rect x="847.90" y="722.3" width="1" height="3" fill="#e4e4e4"/>
<rect x="862.70" y="617.0" width="5.6" height="104.80" fill="#0060cc"/>
<rect x="868.30" y="607.8" width="5.5" height="114.00" fill="#b8dbff"/>
<rect x="882.60" y="614.2" width="5.6" height="107.60" fill="#0060cc"/>
<rect x="888.20" y="641.9" width="5.5" height="79.90" fill="#b8dbff"/>
<text x="888.20" y="736" font-size="10.4" fill="#808080" text-anchor="middle" textLength="25.9" lengthAdjust="spacingAndGlyphs">07/25</text>
<rect x="887.70" y="722.3" width="1" height="3" fill="#e4e4e4"/>
<rect x="902.50" y="611.1" width="5.6" height="110.70" fill="#0060cc"/>
<rect x="908.10" y="653.5" width="5.5" height="68.30" fill="#b8dbff"/>
<rect x="922.40" y="615.2" width="5.6" height="106.60" fill="#0060cc"/>
<rect x="928.00" y="679.2" width="5.5" height="42.60" fill="#b8dbff"/>
<text x="928.00" y="736" font-size="10.4" fill="#808080" text-anchor="middle" textLength="25.9" lengthAdjust="spacingAndGlyphs">07/27</text>
<rect x="927.50" y="722.3" width="1" height="3" fill="#e4e4e4"/>
<rect x="942.30" y="611.6" width="5.6" height="110.20" fill="#0060cc"/>
<rect x="947.90" y="610.6" width="5.5" height="111.20" fill="#b8dbff"/>
<rect x="962.20" y="617.0" width="5.6" height="104.80" fill="#0060cc"/>
<rect x="967.80" y="624.5" width="5.5" height="97.30" fill="#b8dbff"/>
<text x="967.80" y="736" font-size="10.4" fill="#808080" text-anchor="middle" textLength="25.9" lengthAdjust="spacingAndGlyphs">07/29</text>
<rect x="967.30" y="722.3" width="1" height="3" fill="#e4e4e4"/>
<rect x="982.10" y="611.1" width="5.6" height="110.70" fill="#0060cc"/>
<rect x="987.70" y="689.4" width="5.5" height="32.40" fill="#b8dbff"/>
<text x="1007.60" y="736" font-size="10.4" fill="#808080" text-anchor="middle" textLength="25.9" lengthAdjust="spacingAndGlyphs">07/31</text>
<rect x="1007.10" y="722.3" width="1" height="3" fill="#e4e4e4"/>
<polyline points="410.60,721.6 430.50,629.6 450.40,645.8 470.30,626.5 490.20,654.0 510.10,656.9 530.00,661.2 549.90,624.5 569.80,634.1 589.70,680.7 609.60,675.1 629.50,673.9 649.40,687.8 669.30,648.3 689.20,637.3 709.10,625.9 729.00,677.6 748.90,661.0 768.80,684.4 788.70,663.8 808.60,681.7 828.50,658.6 848.40,689.4 868.30,688.7 888.20,672.7 908.10,663.8 928.00,632.2 947.90,686.1 967.80,683.0 987.70,599.5 1007.60,721.6" fill="none" stroke="#e6bf45" stroke-width="1.7" stroke-linejoin="round"/>
<rect x="568.3" y="751.5" width="8" height="5.7" rx="1" fill="#0060cc"/>
<text x="579.8" y="757" font-size="10.2" fill="#8a8a8a" text-anchor="start" textLength="60.4" lengthAdjust="spacingAndGlyphs">Energy usage</text>
<rect x="647.6" y="751.5" width="8" height="5.7" rx="1" fill="#b8dbff"/>
<text x="659" y="757" font-size="10.2" fill="#8a8a8a" text-anchor="start" textLength="32" lengthAdjust="spacingAndGlyphs">Output</text>
<rect x="698.8" y="753.8" width="8" height="1.4" fill="#e5bf4f"/>
<text x="710.2" y="757" font-size="10.2" fill="#8a8a8a" text-anchor="start" textLength="102" lengthAdjust="spacingAndGlyphs">Usage-to-Output ratio</text>
<rect x="1248" y="551.5" width="80.5" height="21" rx="2" fill="#fff" stroke="#d9d9d9"/>
<text x="1253.6" y="566.8" font-size="10.5" fill="#606060" text-anchor="start" textLength="36.4" lengthAdjust="spacingAndGlyphs">Team A</text>
<path d="M1315 560.3 l3 3 l3 -3" fill="none" stroke="#aaa" stroke-width="0.9"/>
<rect x="1339" y="552" width="1" height="20" fill="#dcdcdc"/>
<path d="M1356 555.5 V566 M1352.2 562.3 L1356 566 L1359.8 562.3 M1349.5 564.5 V569 H1362.5 V564.5" fill="none" stroke="#aab0bf" stroke-width="1.2"/>
<path d="M1219.50 605.00 A67.5 67.5 0 0 1 1283.70 651.64 L1256.12 660.60 A38.5 38.5 0 0 0 1219.50 634.00 Z" fill="#002d72" stroke="#002d72" stroke-width="0.5" stroke-linejoin="bevel"/>
<path d="M1283.70 651.64 A67.5 67.5 0 0 1 1259.18 727.11 L1242.13 703.65 A38.5 38.5 0 0 0 1256.12 660.60 Z" fill="#004a9c" stroke="#004a9c" stroke-width="0.5" stroke-linejoin="bevel"/>
<path d="M1259.18 727.11 A67.5 67.5 0 0 1 1179.82 727.11 L1196.87 703.65 A38.5 38.5 0 0 0 1242.13 703.65 Z" fill="#0062cc" stroke="#0062cc" stroke-width="0.5" stroke-linejoin="bevel"/>
<path d="M1179.82 727.11 A67.5 67.5 0 0 1 1155.30 651.64 L1182.88 660.60 A38.5 38.5 0 0 0 1196.87 703.65 Z" fill="#6aa6ff" stroke="#6aa6ff" stroke-width="0.5" stroke-linejoin="bevel"/>
<path d="M1155.30 651.64 A67.5 67.5 0 0 1 1219.50 605.00 L1219.50 634.00 A38.5 38.5 0 0 0 1182.88 660.60 Z" fill="#b5d8ff" stroke="#b5d8ff" stroke-width="0.5" stroke-linejoin="bevel"/>
<text x="1217.5" y="673.4" font-size="10.8" fill="#555" text-anchor="middle" textLength="36" lengthAdjust="spacingAndGlyphs">Team A</text>
<text x="1076.4" y="609.4" font-size="10.2" fill="#b5d8ff" text-anchor="start" textLength="64.2" lengthAdjust="spacingAndGlyphs">Lighting Soc...</text>
<text x="1076.4" y="623" font-size="10.2" fill="#666" text-anchor="start" textLength="28" lengthAdjust="spacingAndGlyphs">0.00%</text>
<path d="M1076 612 H1175.5 L1179.5 617.5" fill="none" stroke="#b5d8ff" stroke-width="1.3"/>
<text x="1362" y="609.4" font-size="10.2" fill="#002d72" text-anchor="end" textLength="34.3" lengthAdjust="spacingAndGlyphs">Process</text>
<text x="1362" y="623" font-size="10.2" fill="#666" text-anchor="end" textLength="28" lengthAdjust="spacingAndGlyphs">0.00%</text>
<path d="M1362.5 612 H1262 L1258.5 617.5" fill="none" stroke="#002d72" stroke-width="1.3"/>
<text x="1076.4" y="692.5" font-size="10.2" fill="#6aa6ff" text-anchor="start" textLength="28.1" lengthAdjust="spacingAndGlyphs">Power</text>
<text x="1076.4" y="706.4" font-size="10.2" fill="#666" text-anchor="start" textLength="28" lengthAdjust="spacingAndGlyphs">0.00%</text>
<path d="M1076 695.3 H1149 L1154 692.8" fill="none" stroke="#6aa6ff" stroke-width="1.3"/>
<text x="1362" y="692.5" font-size="10.2" fill="#004a9c" text-anchor="end" textLength="38.5" lengthAdjust="spacingAndGlyphs">AirCon...</text>
<text x="1362" y="706.4" font-size="10.2" fill="#666" text-anchor="end" textLength="28" lengthAdjust="spacingAndGlyphs">0.00%</text>
<path d="M1362.5 695.3 H1290 L1285.5 692.8" fill="none" stroke="#004a9c" stroke-width="1.3"/>
<text x="1362" y="744.3" font-size="10.2" fill="#0062cc" text-anchor="end" textLength="67" lengthAdjust="spacingAndGlyphs">CDA electricity</text>
<text x="1362" y="757.4" font-size="10.2" fill="#666" text-anchor="end" textLength="28" lengthAdjust="spacingAndGlyphs">0.00%</text>
<path d="M1362.5 746.5 H1219.5 V739" fill="none" stroke="#0062cc" stroke-width="1.3"/>
</svg></body></html>
